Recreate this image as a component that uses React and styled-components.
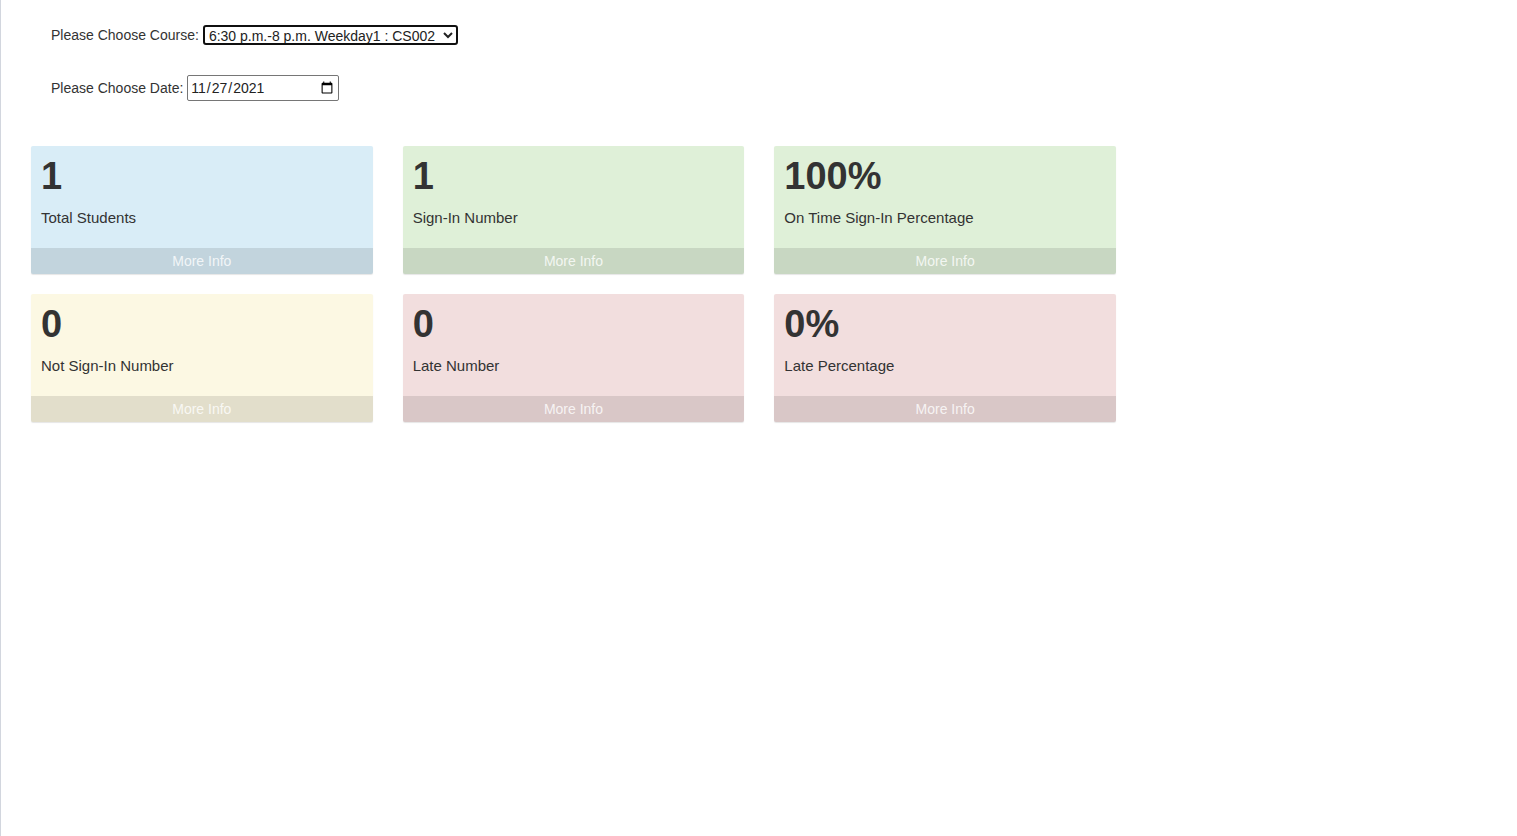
import React from 'react';
import styled, { createGlobalStyle } from 'styled-components';

const GlobalStyle = createGlobalStyle`
  html, body {
    margin: 0;
    padding: 0;
    background: #fff;
    font-family: "Liberation Sans", Arial, Helvetica, sans-serif;
    font-size: 14px;
    color: #333;
  }
`;

const Wrapper = styled.div`
  min-height: 836px;
  border-left: 1px solid #d2d6de;
  box-sizing: border-box;
  padding: 15px 30px;
`;

const Filters = styled.div`
  padding: 10px 20px 0;
`;

const FormRow = styled.div`
  display: flex;
  align-items: center;
  height: 20px;
  margin-bottom: ${p => p.$gap || 0}px;
  label {
    margin-right: 4px;
  }
`;

const CourseSelect = styled.select`
  font-family: "Liberation Sans", Arial, sans-serif;
  font-size: 14px;
  color: #222;
  height: 20px;
  width: 255px;
  padding: 0;
  border: 2px solid #101010;
  border-radius: 3px;
  background: #fff;
`;

const DateInput = styled.input`
  font-family: "Liberation Sans", Arial, sans-serif;
  font-size: 14px;
  color: #222;
  height: 26px;
  width: 152px;
  box-sizing: border-box;
  padding: 0 2px;
  border: 1px solid #767676;
  border-radius: 2px;
`;

const Grid = styled.div`
  display: grid;
  grid-template-columns: repeat(3, 341.67px);
  column-gap: 30px;
  row-gap: 20px;
  margin-top: 48px;
`;

const SmallBox = styled.div`
  background: ${p => p.$bg};
  border-radius: 2px;
  box-shadow: 0 1px 1px rgba(0, 0, 0, 0.1);
  overflow: hidden;
`;

const Inner = styled.div`
  padding: 10px;
  height: 82px;
`;

const Value = styled.h3`
  margin: 0 0 10px;
  font-size: 38px;
  font-weight: bold;
  line-height: 41.8px;
  white-space: nowrap;
`;

const Caption = styled.p`
  margin: 0;
  font-size: 15px;
  line-height: 20px;
`;

const Footer = styled.a`
  display: block;
  text-align: center;
  padding: 3px 0;
  line-height: 20px;
  font-size: 14px;
  color: rgba(255, 255, 255, 0.8);
  background: rgba(0, 0, 0, 0.1);
  text-decoration: none;
`;

const boxes = [
  { value: '1', label: 'Total Students', bg: '#d9edf7' },
  { value: '1', label: 'Sign-In Number', bg: '#dff0d8' },
  { value: '100%', label: 'On Time Sign-In Percentage', bg: '#dff0d8' },
  { value: '0', label: 'Not Sign-In Number', bg: '#fcf8e3' },
  { value: '0', label: 'Late Number', bg: '#f2dede' },
  { value: '0%', label: 'Late Percentage', bg: '#f2dede' },
];

export default function App() {
  return (
    <>
      <GlobalStyle />
      <Wrapper>
        <Filters>
          <FormRow $gap={33}>
            <label>Please Choose Course:</label>
            <CourseSelect defaultValue="cs002">
              <option value="cs002">6:30 p.m.-8 p.m. Weekday1 : CS002</option>
            </CourseSelect>
          </FormRow>
          <FormRow>
            <label>Please Choose Date:</label>
            <DateInput type="date" defaultValue="2021-11-27" />
          </FormRow>
        </Filters>
        <Grid>
          {boxes.map((b, i) => (
            <SmallBox key={i} $bg={b.bg}>
              <Inner>
                <Value>{b.value}</Value>
                <Caption>{b.label}</Caption>
              </Inner>
              <Footer href="#">More Info</Footer>
            </SmallBox>
          ))}
        </Grid>
      </Wrapper>
    </>
  );
}
